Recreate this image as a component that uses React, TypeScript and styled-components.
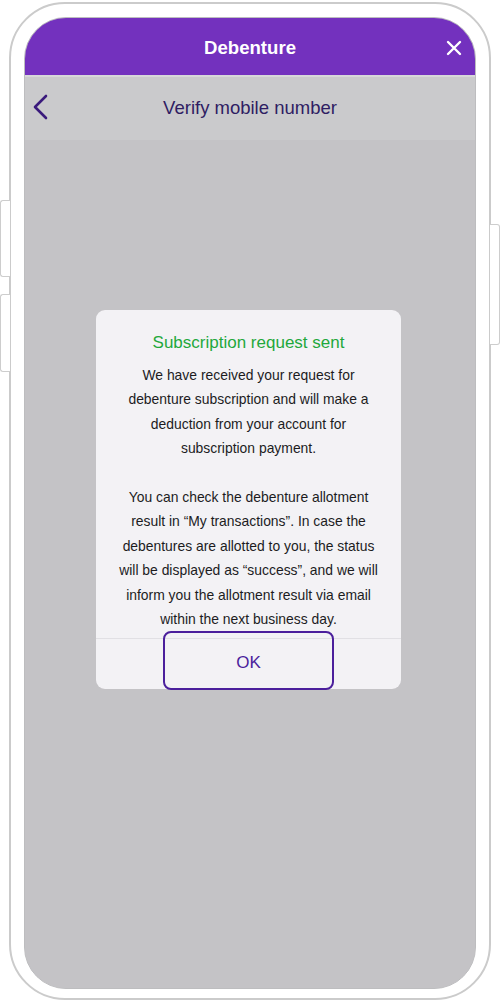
import React from 'react';
import styled, { createGlobalStyle } from 'styled-components';

const GlobalStyle = createGlobalStyle`
    html, body {
        margin: 0;
        padding: 0;
        background: #ffffff;
        font-family: 'Liberation Sans', Arial, sans-serif;
    }
    #root {
        width: 500px;
        height: 1004px;
        overflow: hidden;
    }
`;

const messageLines = [
    'We have received your request for',
    'debenture subscription and will make a',
    'deduction from your account for',
    'subscription payment.',
    '',
    'You can check the debenture allotment',
    'result in \u201CMy transactions\u201D. In case the',
    'debentures are allotted to you, the status',
    'will be displayed as \u201Csuccess\u201D, and we will',
    'inform you the allotment result via email',
    'within the next business day.',
];

const App = () => {
    return (
        <>
            <GlobalStyle />
            <Page>
                <Shell>
                    <SideKey side="left" top={196} length={75} />
                    <SideKey side="left" top={290} length={76} />
                    <SideKey side="right" top={220} length={119} />
                    <Screen>
                        <Header>
                            <HeaderTitle>Debenture</HeaderTitle>
                            <CloseButton aria-label="Close">
                                <svg width="16" height="16" viewBox="0 0 16 16">
                                    <path
                                        d="M2 2 L14 14 M14 2 L2 14"
                                        stroke="#fff"
                                        strokeWidth="2.4"
                                        strokeLinecap="round"
                                    />
                                </svg>
                            </CloseButton>
                        </Header>
                        <NavBar>
                            <BackButton aria-label="Back">
                                <svg width="16" height="26" viewBox="0 0 16 26">
                                    <path
                                        d="M13 2 L2 13 L13 24"
                                        fill="none"
                                        stroke="#3a1a7c"
                                        strokeWidth="2.6"
                                        strokeLinecap="round"
                                        strokeLinejoin="round"
                                    />
                                </svg>
                            </BackButton>
                            <NavTitle>Verify mobile number</NavTitle>
                        </NavBar>
                        <Overlay>
                            <Dialog>
                                <DialogTitle>Subscription request sent</DialogTitle>
                                <DialogBody>
                                    {messageLines.map((line, i) => (
                                        <Line key={i}>{line || '\u00A0'}</Line>
                                    ))}
                                </DialogBody>
                                <DialogFooter>
                                    <OkButton>OK</OkButton>
                                </DialogFooter>
                            </Dialog>
                        </Overlay>
                    </Screen>
                </Shell>
            </Page>
        </>
    );
};

const Page = styled.div`
    width: 500px;
    height: 1004px;
    padding: 2px 9px 0 9px;
    box-sizing: border-box;
`;

const Shell = styled.div`
    position: relative;
    width: 482px;
    height: 998px;
    box-sizing: border-box;
    border: 2px solid #cbcbcb;
    border-radius: 56px;
    background: #ffffff;
    padding: 13px 13px 9px 13px;
`;

const SideKey = styled.div<{ side: 'left' | 'right'; top: number; length: number }>`
    position: absolute;
    top: ${({ top }) => top}px;
    ${({ side }) => (side === 'left' ? 'left: -11px;' : 'right: -11px;')}
    width: 9px;
    height: ${({ length }) => length}px;
    background: #ffffff;
    border: 1.5px solid #cdcdcd;
    ${({ side }) =>
        side === 'left'
            ? 'border-right: none; border-radius: 3px 0 0 3px;'
            : 'border-left: none; border-radius: 0 3px 3px 0;'}
`;

const Screen = styled.div`
    height: 100%;
    box-sizing: border-box;
    border: 1px solid #bdbdbf;
    border-radius: 42px;
    overflow: hidden;
    display: flex;
    flex-direction: column;
    background: #c4c3c6;
`;

const Header = styled.div`
    position: relative;
    height: 57px;
    background: #7331be;
    display: flex;
    align-items: center;
    justify-content: center;
    flex-shrink: 0;
`;

const HeaderTitle = styled.div`
    color: #ffffff;
    font-size: 18.6px;
    font-weight: 700;
    margin-top: 2px;
`;

const CloseButton = styled.div`
    position: absolute;
    right: 13px;
    top: 22px;
    width: 16px;
    height: 16px;
    display: flex;
`;

const NavBar = styled.div`
    position: relative;
    height: 63px;
    border-top: 2px solid #d7d7d9;
    background: #cacacc;
    display: flex;
    align-items: center;
    justify-content: center;
    flex-shrink: 0;
`;

const BackButton = styled.div`
    position: absolute;
    left: 8px;
    top: 17px;
    display: flex;
`;

const NavTitle = styled.div`
    color: #2f1d63;
    font-size: 18.5px;
    margin-top: -2px;
`;

const Overlay = styled.div`
    flex: 1;
    background: #c4c3c6;
    padding: 170px 0 0 71px;
`;

const Dialog = styled.div`
    width: 305px;
    background: #f3f2f5;
    border-radius: 9px;
    padding-top: 22px;
    text-align: center;
`;

const DialogTitle = styled.div`
    color: #1fa83c;
    font-size: 17px;
    line-height: 22px;
`;

const DialogBody = styled.div`
    margin-top: 9px;
    padding-bottom: 7px;
    color: #1c1c1e;
    font-size: 13.9px;
    line-height: 24.4px;
`;

const Line = styled.div`
    white-space: nowrap;
`;

const DialogFooter = styled.div`
    height: 50px;
    border-top: 1px solid #e1e0e4;
    display: flex;
    justify-content: center;
    align-items: flex-start;
`;

const OkButton = styled.div`
    margin-top: -8px;
    width: 171px;
    height: 59px;
    box-sizing: border-box;
    border: 2px solid #4b1f9c;
    border-radius: 8px;
    display: flex;
    align-items: center;
    justify-content: center;
    color: #4b1f9c;
    font-size: 17px;
    padding-top: 4px;
`;

export default App;
